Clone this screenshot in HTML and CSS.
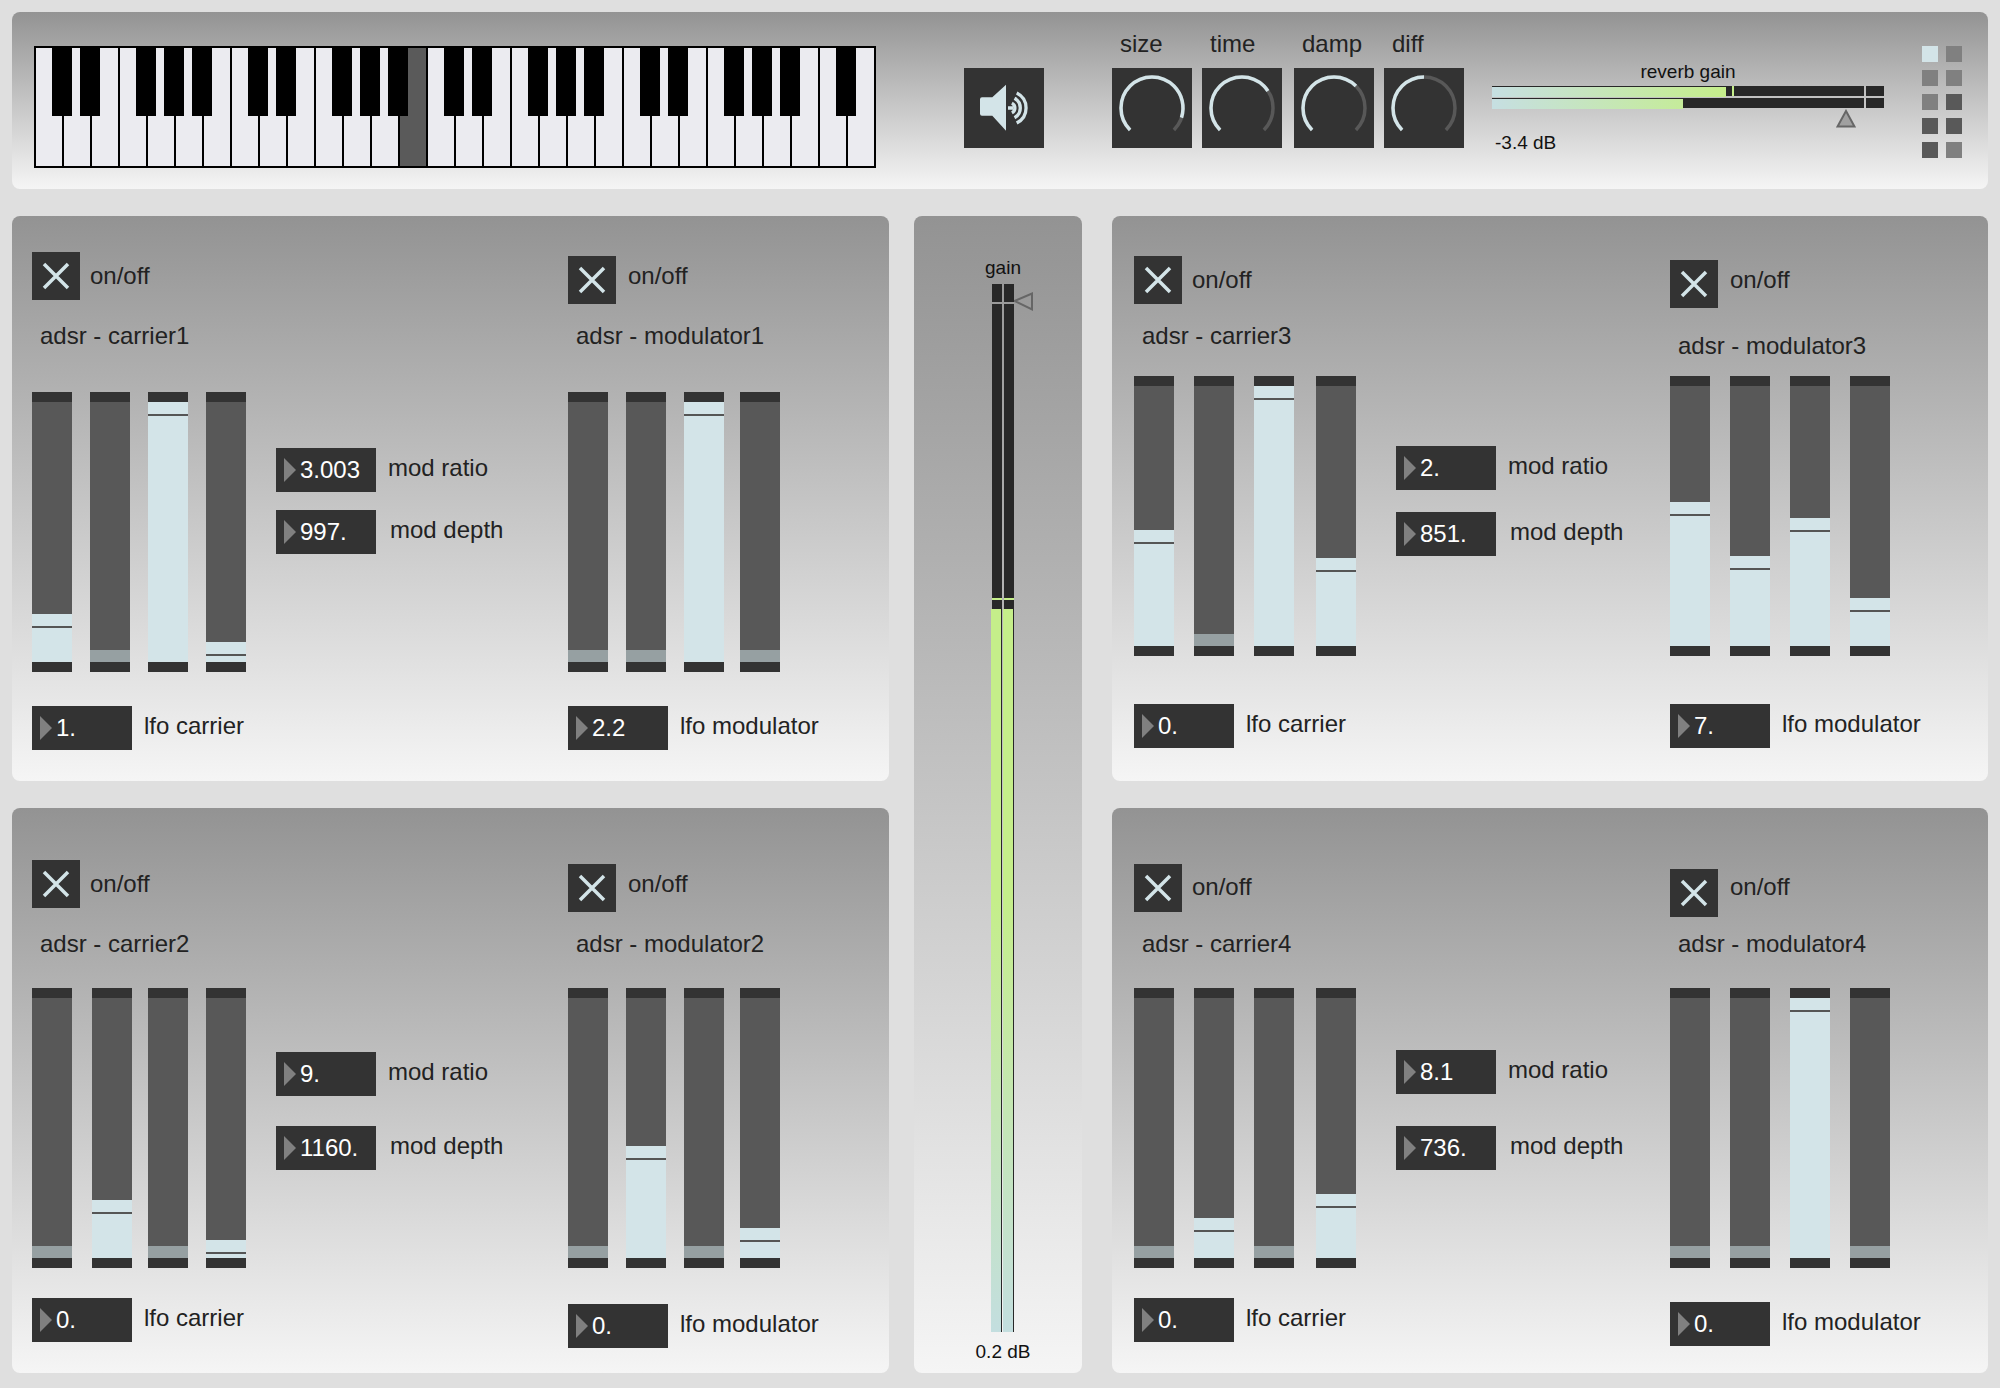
FILE: index.html
```html
<!DOCTYPE html>
<html>
<head>
  <meta charset="utf-8">
  <title>FM synth</title>
  <link rel="stylesheet" href="styles.css">
</head>
<body>

<!-- top bar -->
<div class="panel top">
  <div class="piano">
    <i class="key sharp"></i><i class="key sharp"></i><i class="key"></i><i class="key sharp"></i><i class="key sharp"></i><i class="key sharp"></i><i class="key"></i>
    <i class="key sharp"></i><i class="key sharp"></i><i class="key"></i><i class="key sharp"></i><i class="key sharp"></i><i class="key sharp"></i><i class="key held"></i>
    <i class="key sharp"></i><i class="key sharp"></i><i class="key"></i><i class="key sharp"></i><i class="key sharp"></i><i class="key sharp"></i><i class="key"></i>
    <i class="key sharp"></i><i class="key sharp"></i><i class="key"></i><i class="key sharp"></i><i class="key sharp"></i><i class="key sharp"></i><i class="key"></i>
    <i class="key sharp"></i><i class="key last"></i>
  </div>

  <div class="speaker">
    <svg width="80" height="80" viewBox="0 0 80 80">
      <path class="speaker-body" d="M18 29.3H28.3L42 16.7V62.7L28.3 47.7H18Q16 47.7 16 45.7V31.3Q16 29.3 18 29.3Z"/>
      <path class="speaker-wave" d="M52.7 25A16.7 16.7 0 0 1 52.7 55M50.5 30.3A11 11 0 0 1 50.5 49.7M47.9 35.1A5.5 5.5 0 0 1 47.9 44.9M44 40H49"/>
    </svg>
  </div>

  <div class="knobs">
    <div class="knob">
      <span class="knob-name">size</span>
      <svg class="knob-dial" width="80" height="80" viewBox="0 0 80 80">
        <path class="arc-bg" d="M18.08 61.92A31 31 0 1 1 61.92 61.92"/>
        <path class="arc-val" pathLength="270" stroke-dasharray="243 270" d="M18.08 61.92A31 31 0 1 1 61.92 61.92"/>
      </svg>
    </div>
    <div class="knob">
      <span class="knob-name">time</span>
      <svg class="knob-dial" width="80" height="80" viewBox="0 0 80 80">
        <path class="arc-bg" d="M18.08 61.92A31 31 0 1 1 61.92 61.92"/>
        <path class="arc-val" pathLength="270" stroke-dasharray="192 270" d="M18.08 61.92A31 31 0 1 1 61.92 61.92"/>
      </svg>
    </div>
    <div class="knob knob-wide">
      <span class="knob-name">damp</span>
      <svg class="knob-dial" width="80" height="80" viewBox="0 0 80 80">
        <path class="arc-bg" d="M18.08 61.92A31 31 0 1 1 61.92 61.92"/>
        <path class="arc-val" pathLength="270" stroke-dasharray="180 270" d="M18.08 61.92A31 31 0 1 1 61.92 61.92"/>
      </svg>
    </div>
    <div class="knob">
      <span class="knob-name">diff</span>
      <svg class="knob-dial" width="80" height="80" viewBox="0 0 80 80">
        <path class="arc-bg" d="M18.08 61.92A31 31 0 1 1 61.92 61.92"/>
        <path class="arc-val" pathLength="270" stroke-dasharray="135 270" d="M18.08 61.92A31 31 0 1 1 61.92 61.92"/>
      </svg>
    </div>
  </div>

  <div class="reverb">
    <div class="reverb-title">reverb gain</div>
    <div class="rev-row">
      <div class="rev-main">
        <div class="rev-fill" style="width:234px"></div>
        <div class="rev-peak"></div>
      </div>
      <div class="rev-end"></div>
    </div>
    <div class="rev-row">
      <div class="rev-main">
        <div class="rev-fill" style="width:191px"></div>
      </div>
      <div class="rev-end"></div>
    </div>
    <svg class="rev-thumb" width="20" height="19" viewBox="0 0 20 19">
      <path d="M10 2L18.5 17.5H1.5Z"/>
    </svg>
    <div class="reverb-db">-3.4 dB</div>
  </div>

  <div class="matrix">
    <i class="cell on"></i><i class="cell mid"></i>
    <i class="cell mid"></i><i class="cell mid"></i>
    <i class="cell mid"></i><i class="cell"></i>
    <i class="cell"></i><i class="cell"></i>
    <i class="cell"></i><i class="cell mid"></i>
  </div>
</div>

<div class="main">

  <!-- carrier 1 / modulator 1 -->
  <div class="panel voices p1">
    <div class="voice carrier">
      <div class="toggle-row">
        <svg class="toggle" width="48" height="48" viewBox="0 0 48 48"><path d="M12 12L36 36M36 12L12 36"/></svg>
        <span class="onoff">on/off</span>
      </div>
      <div class="adsr-name">adsr - carrier1</div>
      <div class="adsr-row">
        <div class="adsr cols-a">
          <div class="slider"><div class="track"><div class="fill" style="height:48px"></div></div></div>
          <div class="slider"><div class="track"><div class="fill low"></div></div></div>
          <div class="slider"><div class="track"><div class="fill" style="height:260px"></div></div></div>
          <div class="slider"><div class="track"><div class="fill" style="height:20px"></div></div></div>
        </div>
        <div class="mods">
          <div class="num-row"><div class="num">3.003</div><span class="num-label">mod ratio</span></div>
          <div class="num-row"><div class="num">997.</div><span class="num-label depth">mod depth</span></div>
        </div>
      </div>
      <div class="num-row lfo"><div class="num">1.</div><span class="num-label">lfo carrier</span></div>
    </div>
    <div class="voice modulator">
      <div class="toggle-row">
        <svg class="toggle" width="48" height="48" viewBox="0 0 48 48"><path d="M12 12L36 36M36 12L12 36"/></svg>
        <span class="onoff">on/off</span>
      </div>
      <div class="adsr-name">adsr - modulator1</div>
      <div class="adsr cols-b">
        <div class="slider"><div class="track"><div class="fill low"></div></div></div>
        <div class="slider"><div class="track"><div class="fill low"></div></div></div>
        <div class="slider"><div class="track"><div class="fill" style="height:260px"></div></div></div>
        <div class="slider"><div class="track"><div class="fill low"></div></div></div>
      </div>
      <div class="num-row lfo"><div class="num">2.2</div><span class="num-label">lfo modulator</span></div>
    </div>
  </div>

  <!-- master gain -->
  <div class="panel master">
    <div class="master-label">gain</div>
    <div class="gain">
      <div class="gain-ch">
        <div class="gain-cap"></div>
        <div class="gain-main"><div class="gain-peak"></div><div class="gain-fill"></div></div>
      </div>
      <div class="gain-ch">
        <div class="gain-cap"></div>
        <div class="gain-main"><div class="gain-peak"></div><div class="gain-fill"></div></div>
      </div>
      <svg class="gain-thumb" width="20" height="20" viewBox="0 0 20 20">
        <path d="M0.5 9L18 1.5V17.5Z"/>
      </svg>
    </div>
    <div class="master-db">0.2 dB</div>
  </div>

  <!-- carrier 3 / modulator 3 -->
  <div class="panel voices p3">
    <div class="voice carrier">
      <div class="toggle-row">
        <svg class="toggle" width="48" height="48" viewBox="0 0 48 48"><path d="M12 12L36 36M36 12L12 36"/></svg>
        <span class="onoff">on/off</span>
      </div>
      <div class="adsr-name">adsr - carrier3</div>
      <div class="adsr-row">
        <div class="adsr cols-d">
          <div class="slider"><div class="track"><div class="fill" style="height:116px"></div></div></div>
          <div class="slider"><div class="track"><div class="fill low"></div></div></div>
          <div class="slider"><div class="track"><div class="fill" style="height:260px"></div></div></div>
          <div class="slider"><div class="track"><div class="fill" style="height:88px"></div></div></div>
        </div>
        <div class="mods">
          <div class="num-row"><div class="num">2.</div><span class="num-label">mod ratio</span></div>
          <div class="num-row"><div class="num">851.</div><span class="num-label depth">mod depth</span></div>
        </div>
      </div>
      <div class="num-row lfo"><div class="num">0.</div><span class="num-label">lfo carrier</span></div>
    </div>
    <div class="voice modulator">
      <div class="toggle-row">
        <svg class="toggle" width="48" height="48" viewBox="0 0 48 48"><path d="M12 12L36 36M36 12L12 36"/></svg>
        <span class="onoff">on/off</span>
      </div>
      <div class="adsr-name">adsr - modulator3</div>
      <div class="adsr cols-e">
        <div class="slider"><div class="track"><div class="fill" style="height:144px"></div></div></div>
        <div class="slider"><div class="track"><div class="fill" style="height:90px"></div></div></div>
        <div class="slider"><div class="track"><div class="fill" style="height:128px"></div></div></div>
        <div class="slider"><div class="track"><div class="fill" style="height:48px"></div></div></div>
      </div>
      <div class="num-row lfo"><div class="num">7.</div><span class="num-label">lfo modulator</span></div>
    </div>
  </div>

  <!-- carrier 2 / modulator 2 -->
  <div class="panel voices p2">
    <div class="voice carrier">
      <div class="toggle-row">
        <svg class="toggle" width="48" height="48" viewBox="0 0 48 48"><path d="M12 12L36 36M36 12L12 36"/></svg>
        <span class="onoff">on/off</span>
      </div>
      <div class="adsr-name">adsr - carrier2</div>
      <div class="adsr-row">
        <div class="adsr cols-c">
          <div class="slider"><div class="track"><div class="fill low"></div></div></div>
          <div class="slider"><div class="track"><div class="fill" style="height:58px"></div></div></div>
          <div class="slider"><div class="track"><div class="fill low"></div></div></div>
          <div class="slider"><div class="track"><div class="fill" style="height:18px"></div></div></div>
        </div>
        <div class="mods">
          <div class="num-row"><div class="num">9.</div><span class="num-label">mod ratio</span></div>
          <div class="num-row"><div class="num">1160.</div><span class="num-label depth">mod depth</span></div>
        </div>
      </div>
      <div class="num-row lfo"><div class="num">0.</div><span class="num-label">lfo carrier</span></div>
    </div>
    <div class="voice modulator">
      <div class="toggle-row">
        <svg class="toggle" width="48" height="48" viewBox="0 0 48 48"><path d="M12 12L36 36M36 12L12 36"/></svg>
        <span class="onoff">on/off</span>
      </div>
      <div class="adsr-name">adsr - modulator2</div>
      <div class="adsr cols-b">
        <div class="slider"><div class="track"><div class="fill low"></div></div></div>
        <div class="slider"><div class="track"><div class="fill" style="height:112px"></div></div></div>
        <div class="slider"><div class="track"><div class="fill low"></div></div></div>
        <div class="slider"><div class="track"><div class="fill" style="height:30px"></div></div></div>
      </div>
      <div class="num-row lfo"><div class="num">0.</div><span class="num-label">lfo modulator</span></div>
    </div>
  </div>

  <!-- carrier 4 / modulator 4 -->
  <div class="panel voices p4">
    <div class="voice carrier">
      <div class="toggle-row">
        <svg class="toggle" width="48" height="48" viewBox="0 0 48 48"><path d="M12 12L36 36M36 12L12 36"/></svg>
        <span class="onoff">on/off</span>
      </div>
      <div class="adsr-name">adsr - carrier4</div>
      <div class="adsr-row">
        <div class="adsr cols-d">
          <div class="slider"><div class="track"><div class="fill low"></div></div></div>
          <div class="slider"><div class="track"><div class="fill" style="height:40px"></div></div></div>
          <div class="slider"><div class="track"><div class="fill low"></div></div></div>
          <div class="slider"><div class="track"><div class="fill" style="height:64px"></div></div></div>
        </div>
        <div class="mods">
          <div class="num-row"><div class="num">8.1</div><span class="num-label">mod ratio</span></div>
          <div class="num-row"><div class="num">736.</div><span class="num-label depth">mod depth</span></div>
        </div>
      </div>
      <div class="num-row lfo"><div class="num">0.</div><span class="num-label">lfo carrier</span></div>
    </div>
    <div class="voice modulator">
      <div class="toggle-row">
        <svg class="toggle" width="48" height="48" viewBox="0 0 48 48"><path d="M12 12L36 36M36 12L12 36"/></svg>
        <span class="onoff">on/off</span>
      </div>
      <div class="adsr-name">adsr - modulator4</div>
      <div class="adsr cols-e">
        <div class="slider"><div class="track"><div class="fill low"></div></div></div>
        <div class="slider"><div class="track"><div class="fill low"></div></div></div>
        <div class="slider"><div class="track"><div class="fill" style="height:260px"></div></div></div>
        <div class="slider"><div class="track"><div class="fill low"></div></div></div>
      </div>
      <div class="num-row lfo"><div class="num">0.</div><span class="num-label">lfo modulator</span></div>
    </div>
  </div>

</div>

</body>
</html>
```

FILE: styles.css
```css
body {
  margin: 0;
  padding: 12px;
  background-color: #dfdfdf;
  color: #222;
  font-family: "Liberation Sans", Arial, sans-serif;
  font-size: 24px;
}

.panel {
  border-radius: 8px;
  background: linear-gradient(#939393, #f5f5f5);
}

/* top bar */
.top {
  display: flex;
  height: 177px;
  padding-left: 22px;
}

.piano {
  display: flex;
  flex: none;
  width: 842px;
  height: 122px;
  margin-top: 34px;
  box-sizing: border-box;
  border: 2px solid #000;
}

.key {
  position: relative;
  flex: none;
  width: 28px;
  box-sizing: border-box;
  border-right: 2px solid #000;
  background-color: #ebebf0;
}

.key.sharp::after {
  content: "";
  position: absolute;
  top: 0;
  right: -10px;
  width: 20px;
  height: 68px;
  background-color: #000;
  z-index: 1;
}

.key.held {
  background-color: #5a5a5a;
}

.key.last {
  width: 26px;
  border-right: 0;
}

.speaker {
  flex: none;
  width: 80px;
  height: 80px;
  margin: 56px 0 0 88px;
  background-color: #333;
}

.speaker svg {
  display: block;
}

.speaker-body {
  fill: #d3e4e8;
}

.speaker-wave {
  fill: none;
  stroke: #d3e4e8;
  stroke-width: 3.3;
}

.knobs {
  display: flex;
  flex: none;
  gap: 10px;
  margin: 20px 0 0 68px;
}

.knob-wide {
  margin-left: 2px;
}

.knob-name {
  display: block;
  height: 24px;
  margin-bottom: 12px;
  padding-left: 8px;
  line-height: 24px;
}

.knob-dial {
  display: block;
  background-color: #333;
}

.arc-bg,
.arc-val {
  fill: none;
  stroke-width: 3.5;
}

.arc-bg {
  stroke: #585858;
}

.arc-val {
  stroke: #d3e4e8;
}

.reverb {
  position: relative;
  flex: none;
  width: 392px;
  margin: 50px 0 0 28px;
  color: #111;
}

.reverb-title {
  height: 20px;
  margin-bottom: 4px;
  font-size: 19px;
  line-height: 20px;
  text-align: center;
}

.rev-row {
  display: flex;
  gap: 2px;
  height: 10px;
  margin-bottom: 2px;
}

.rev-main {
  display: flex;
  width: 372px;
  background-color: #282828;
}

.rev-end {
  width: 18px;
  background-color: #282828;
}

.rev-fill {
  height: 10px;
  margin-top: 1px;
  background: linear-gradient(90deg, #c6dfe2, #c5ee8a) 0 0 / 234px 100% no-repeat;
}

.rev-peak {
  width: 2px;
  margin-left: 6px;
  background-color: #c5ee8a;
}

.rev-thumb {
  position: absolute;
  top: 47px;
  left: 344px;
}

.rev-thumb path {
  fill: #a0a0a0;
  stroke: #666;
  stroke-width: 2;
}

.reverb-db {
  height: 20px;
  margin-top: 25px;
  padding-left: 3px;
  font-size: 19px;
  line-height: 20px;
}

.matrix {
  display: grid;
  flex: none;
  grid-template-columns: 16px 16px;
  grid-auto-rows: 16px;
  gap: 8px;
  margin: 34px 0 0 38px;
}

.cell {
  background-color: #595959;
}

.cell.mid {
  background-color: #808080;
}

.cell.on {
  background-color: #d3e4e8;
}

/* main grid */
.main {
  display: grid;
  grid-template-columns: 877px 173px 876px;
  grid-template-rows: 565px 565px;
  column-gap: 25px;
  row-gap: 27px;
  margin-top: 27px;
}

.main .master {
  width: 168px;
  grid-column: 2;
  grid-row: 1 / span 2;
}

.voices {
  display: flex;
  padding-left: 20px;
}

.p3,
.p4 {
  padding-left: 22px;
}

.voice {
  flex: none;
  box-sizing: border-box;
  padding-top: var(--top);
}

.carrier {
  width: 536px;
}

.toggle-row {
  display: flex;
  align-items: center;
  height: 48px;
}

.toggle {
  display: block;
  flex: none;
  background-color: #333;
}

.toggle path {
  fill: none;
  stroke: #d3e4e8;
  stroke-width: 3.5;
}

.onoff {
  margin-top: var(--onoff, 0);
  margin-left: 10px;
}

.modulator .onoff {
  margin-left: 12px;
}

.adsr-name {
  height: 20px;
  margin-top: var(--gap-name);
  margin-bottom: var(--gap-adsr);
  padding-left: 8px;
  line-height: 20px;
}

.adsr-row {
  display: flex;
}

.adsr {
  display: grid;
  flex: none;
  height: 280px;
}

.cols-a { grid-template-columns: 58px 58px 58px 40px; }
.cols-b { grid-template-columns: 58px 58px 56px 40px; }
.cols-c { grid-template-columns: 60px 56px 58px 40px; }
.cols-d { grid-template-columns: 60px 60px 62px 40px; }
.cols-e { grid-template-columns: 60px 60px 60px 40px; }

.slider {
  box-sizing: border-box;
  width: 40px;
  padding: 10px 0;
  background-color: #333;
}

.track {
  display: flex;
  flex-direction: column;
  justify-content: flex-end;
  height: 260px;
  background-color: #585858;
}

.fill {
  flex: none;
  box-sizing: border-box;
  padding-top: 12px;
  background-color: #d3e4e8;
}

.fill::before {
  content: "";
  display: block;
  height: 2px;
  background-color: #555;
}

.fill.low {
  height: 12px;
  padding-top: 0;
  background-color: #96a0a2;
}

.fill.low::before {
  display: none;
}

.mods {
  margin-top: var(--mods-top);
  margin-left: var(--mods-left);
}

.mods .num-row + .num-row {
  margin-top: var(--mods-gap);
}

.num-row {
  display: flex;
  align-items: center;
}

.lfo {
  margin-top: var(--gap-lfo);
}

.num {
  position: relative;
  flex: none;
  box-sizing: border-box;
  width: 100px;
  height: 44px;
  padding-left: 24px;
  background-color: #333;
  color: #fff;
  line-height: 43px;
}

.num::before {
  content: "";
  position: absolute;
  top: 10px;
  left: 8px;
  border-top: 12px solid transparent;
  border-bottom: 12px solid transparent;
  border-left: 12px solid #808080;
}

.num-label {
  margin-bottom: 4px;
  margin-left: 12px;
}

.num-label.depth {
  margin-left: 14px;
}

/* vertical positions of each voice */
.p1 .carrier { --top: 36px; --gap-name: 26px; --gap-adsr: 46px; --gap-lfo: 34px; --mods-top: 56px; --mods-left: 30px; --mods-gap: 18px; }
.p1 .modulator { --top: 40px; --gap-name: 22px; --gap-adsr: 46px; --gap-lfo: 34px; --onoff: -8px; }
.p2 .carrier { --top: 52px; --gap-name: 26px; --gap-adsr: 34px; --gap-lfo: 30px; --mods-top: 64px; --mods-left: 30px; --mods-gap: 30px; }
.p2 .modulator { --top: 56px; --gap-name: 22px; --gap-adsr: 34px; --gap-lfo: 36px; --onoff: -8px; }
.p3 .carrier { --top: 40px; --gap-name: 22px; --gap-adsr: 30px; --gap-lfo: 48px; --mods-top: 70px; --mods-left: 40px; --mods-gap: 22px; }
.p3 .modulator { --top: 44px; --gap-name: 28px; --gap-adsr: 20px; --gap-lfo: 48px; --onoff: -8px; }
.p4 .carrier { --top: 56px; --gap-name: 22px; --gap-adsr: 34px; --gap-lfo: 30px; --mods-top: 62px; --mods-left: 40px; --mods-gap: 32px; --onoff: -2px; }
.p4 .modulator { --top: 61px; --gap-name: 17px; --gap-adsr: 34px; --gap-lfo: 34px; --onoff: -12px; }

/* master gain */
.master {
  display: flex;
  flex-direction: column;
  align-items: center;
  box-sizing: border-box;
  padding: 42px 0 0 10px;
  color: #111;
  font-size: 19px;
}

.master-label,
.master-db {
  height: 20px;
  line-height: 20px;
}

.gain {
  position: relative;
  display: flex;
  gap: 2px;
  height: 1048px;
  margin: 6px 0 10px;
}

.gain-ch {
  display: flex;
  flex-direction: column;
  gap: 2px;
  width: 10px;
}

.gain-cap {
  height: 18px;
  background-color: #282828;
}

.gain-main {
  display: flex;
  flex: 1;
  flex-direction: column;
  background-color: #282828;
}

.gain-peak {
  height: 2px;
  margin-top: 294px;
  background-color: #c5ee8a;
}

.gain-fill {
  flex: 1;
  width: 10px;
  margin-top: 9px;
  margin-left: -1px;
  background: linear-gradient(#c5ee8a, #c5ee8a 40%, #c3dedf);
}

.gain-thumb {
  position: absolute;
  top: 8px;
  left: 22px;
}

.gain-thumb path {
  fill: none;
  stroke: #666;
  stroke-width: 2;
}
```
